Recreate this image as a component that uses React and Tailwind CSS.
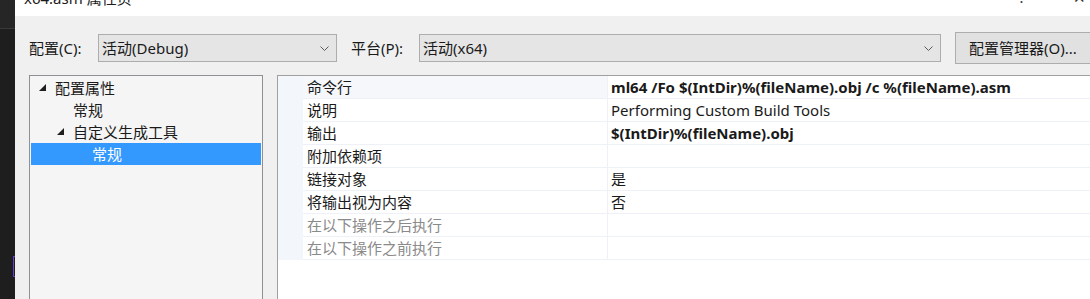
import React from 'react';

const FONT = { fontFamily: '"Noto Sans", "Noto Sans CJK SC", sans-serif' };

const Chevron = () => (
  <svg width="9" height="5" viewBox="0 0 9 5" className="shrink-0">
    <path d="M0.5 0.5 L4.5 4.5 L8.5 0.5" fill="none" stroke="#5a5a5a" strokeWidth="1" />
  </svg>
);

const Expander = () => (
  <svg width="8" height="8" viewBox="0 0 8 8" className="shrink-0">
    <polygon points="7,0 7,7 0,7" fill="#1e1e1e" />
  </svg>
);

const treeItems = [
  { label: '配置属性', indent: 8, expander: true },
  { label: '常规', indent: 42 },
  { label: '自定义生成工具', indent: 26, expander: true },
  { label: '常规', indent: 61, selected: true },
];

const rows = [
  { name: '命令行', value: 'ml64 /Fo $(IntDir)%(fileName).obj /c %(fileName).asm', bold: true, focus: true },
  { name: '说明', value: 'Performing Custom Build Tools' },
  { name: '输出', value: '$(IntDir)%(fileName).obj', bold: true },
  { name: '附加依赖项', value: '' },
  { name: '链接对象', value: '是' },
  { name: '将输出视为内容', value: '否' },
  { name: '在以下操作之后执行', value: '', disabled: true },
  { name: '在以下操作之前执行', value: '', disabled: true },
];

export default function App() {
  return (
    <div className="w-[1090px] h-[299px] flex overflow-hidden bg-white text-[15px] text-[#1a1a1a]" style={FONT}>
      {/* editor strip behind the dialog */}
      <div className="w-[15px] shrink-0 bg-[#1e1e1e] flex flex-col">
        <div className="h-[29px] bg-[#262626] border-b border-[#3a3a3a]" />
        <div className="h-[227px]" />
        <div className="ml-[13px] w-[3px] h-[21px] border-l border-y border-[#6a3fd0]" />
      </div>

      <div className="flex-1 flex flex-col min-w-0">
        {/* title bar, cut at the top */}
        <div className="h-[16px] shrink-0 bg-white overflow-hidden flex justify-between">
          <div className="ml-[9px] -mt-[12px] leading-[20px] text-[#1a1a1a]">x64.asm 属性页</div>
          <div className="flex -mt-[13px] leading-[20px]">
            <span className="w-[16px] text-center text-[#333]">?</span>
            <span className="ml-[43px] mr-[4px] text-[#333]">✕</span>
          </div>
        </div>

        <div className="flex-1 bg-[#f0f0f0] flex flex-col pl-[14px] pt-[16px]">
          {/* configuration bar */}
          <div className="flex items-center h-[32px]">
            <span className="w-[69px] shrink-0 leading-[20px]">配置(C):</span>
            <div className="w-[239px] h-[28px] shrink-0 border border-[#adadad] bg-[#e5e5e5] flex items-center justify-between pl-[3px] pr-[7px]">
              <span className="leading-[20px]">活动(Debug)</span>
              <Chevron />
            </div>
            <span className="ml-[14px] w-[68px] shrink-0 leading-[20px]">平台(P):</span>
            <div className="w-[522px] h-[28px] shrink-0 border border-[#adadad] bg-[#e5e5e5] flex items-center justify-between pl-[3px] pr-[7px]">
              <span className="leading-[20px]">活动(x64)</span>
              <Chevron />
            </div>
            <div className="ml-[14px] w-[150px] h-[32px] shrink-0 border border-[#adadad] bg-[#e1e1e1] flex items-center pl-[13px]">
              <span className="leading-[20px] whitespace-nowrap">配置管理器(O)...</span>
            </div>
          </div>

          {/* panels */}
          <div className="flex flex-1 mt-[11px] min-h-0">
            <div className="w-[234px] shrink-0 border border-[#8f8f94] border-b-0 bg-[#f5f5f5] pt-[1px] px-[1px]">
              {treeItems.map((item, i) => (
                <div
                  key={i}
                  className={`h-[22px] flex items-center leading-[20px] ${item.selected ? 'bg-[#3399ff] text-white' : ''}`}
                  style={{ paddingLeft: item.indent }}
                >
                  {item.expander && (
                    <span className="mr-[8px] flex items-center"><Expander /></span>
                  )}
                  <span>{item.label}</span>
                </div>
              ))}
            </div>

            <div className="ml-[14px] flex-1 border-l border-t border-[#a0a0a0] bg-white flex flex-col min-w-0">
              {rows.map((r, i) => (
                <div key={i} className="flex h-[23px] shrink-0">
                  <div className="w-[25px] shrink-0 bg-[#f3f6fb]" />
                  <div
                    className={`w-[305px] shrink-0 border-b border-r border-[#eef1f7] pl-[4px] flex items-center leading-[20px] ${r.focus ? 'bg-[#f5f7fb]' : ''} ${r.disabled ? 'text-[#8a8a8a]' : ''}`}
                  >
                    {r.name}
                  </div>
                  <div className={`flex-1 border-b border-[#eef1f7] pl-[3px] flex items-center leading-[20px] whitespace-nowrap ${r.bold ? 'font-bold' : ''}`}>
                    {r.value}
                  </div>
                </div>
              ))}
            </div>
          </div>
        </div>
      </div>
    </div>
  );
}
